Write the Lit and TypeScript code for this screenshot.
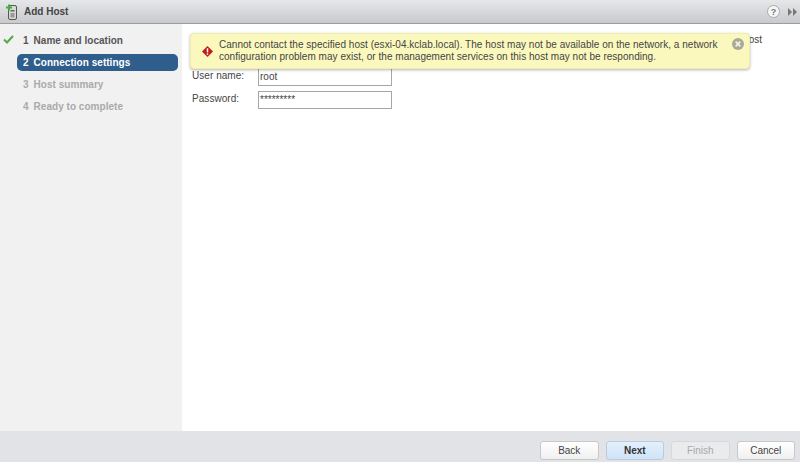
import { LitElement, html, css, svg } from "lit";
import { customElement } from "lit/decorators.js";

@customElement("app-root")
export class AppRoot extends LitElement {
  static styles = css`
    :host { display: block; width: 800px; height: 462px; font-family: "Liberation Sans", Arial, sans-serif; font-size: 10px; color: #444; overflow: hidden; }
    .frame { display: flex; flex-direction: column; width: 800px; height: 462px; background: #fff; }
    .titlebar { height: 24px; box-sizing: border-box; flex: none; display: flex; align-items: center; padding: 0 3px 0 5px; background: linear-gradient(#e6e7e9, #c9cacd); border-bottom: 1px solid #9b9c9e; }
    .appicon { margin-right: 5px; }
    .title { font-weight: bold; color: #444; font-size: 10px; flex: 1; }
    .help { width: 13px; height: 13px; border-radius: 50%; border: 1px solid #aaa; background: #f6f6f6; color: #777; font-size: 9px; font-weight: bold; display: flex; align-items: center; justify-content: center; box-sizing: border-box; margin-right: 8px; }
    .body { flex: 1; display: flex; min-height: 0; }
    .side { width: 182px; flex: none; background: #f1f1f1; padding: 8px 4px 0 0; box-sizing: border-box; display: flex; flex-direction: column; gap: 5px; }
    .step { height: 17px; display: flex; align-items: center; margin-left: 17px; padding-left: 6px; font-weight: bold; border-radius: 5px; color: #555; gap: 5px; position: relative; letter-spacing: 0.03px; }
    .step.cur { background: #2f5d8c; color: #fff; }
    .step.dis { color: #aaa; }
    .check { position: absolute; left: -14px; top: 3px; }
    .main { flex: 1; position: relative; padding: 10px 38px 0 10px; box-sizing: border-box; }
    .intro { height: 12px; line-height: 12px; text-align: right; margin-bottom: 22px; }
    .row { display: grid; grid-template-columns: 66px 134px; height: 18px; margin-bottom: 5px; letter-spacing: 0.05px; }
    .lbl { padding-top: 1px; line-height: 14px; }
    .inp { height: 18px; box-sizing: border-box; border: 1px solid #a6a6a6; padding: 0 0 2px 1px; display: flex; align-items: center; background: #fff; letter-spacing: 0; }
    .alert { position: absolute; left: 8px; top: 9px; width: 560px; height: 36px; box-sizing: border-box; background: #fbf8bd; border: 1px solid #f0edb0; border-radius: 4px; box-shadow: 0 1px 3px rgba(0,0,0,.3); display: flex; align-items: center; padding: 0 5px 0 11px; gap: 6px; }
    .msg { flex: 1; line-height: 12px; letter-spacing: 0.03px; color: #444; white-space: nowrap; }
    .close { align-self: flex-start; margin-top: 4px; }
    .footer { height: 31px; flex: none; background: #e1e3e6; display: flex; justify-content: flex-end; gap: 7px; padding: 10px 5px 2px 0; box-sizing: border-box; }
    .btn { width: 58.5px; box-sizing: border-box; border: 1px solid #c8c8c8; border-radius: 3px; background: linear-gradient(#fff, #f0f0f0); display: flex; align-items: center; justify-content: center; color: #444; }
    .btn.pri { background: linear-gradient(#e4f0fc, #cfe3f8); border-color: #bccbda; font-weight: bold; color: #333; }
    .btn.off { background: #e9ebed; color: #aaa; border-color: #d6d8da; }
  `;

  render() {
    const hostIcon = svg`<svg class="appicon" width="14" height="16" viewBox="0 0 14 16"><rect x="3.5" y="1.5" width="8" height="14" rx="1.5" fill="#d8d8d2" stroke="#55584f"/><rect x="5.5" y="6" width="4" height="1.5" fill="#666"/><rect x="5.5" y="9" width="4" height="4.5" fill="#999"/><path d="M1 2.5h2v-2h2v2h2v2H5v2H3v-2H1z" fill="#3fae3f"/></svg>`;
    return html`<div class="frame">
      <div class="titlebar">${hostIcon}<span class="title">Add Host</span>
        <span class="help">?</span>
        <svg width="9" height="8" viewBox="0 0 9 8"><path d="M0 0l4 4-4 4zM5 0l4 4-4 4z" fill="#777"/></svg>
      </div>
      <div class="body">
        <div class="side">
          <div class="step"><svg class="check" width="11" height="9" viewBox="0 0 11 9"><path d="M1 4.5l3 3L10 1" fill="none" stroke="#55a845" stroke-width="2"/></svg><span>1</span><span>Name and location</span></div>
          <div class="step cur"><span>2</span><span>Connection settings</span></div>
          <div class="step dis"><span>3</span><span>Host summary</span></div>
          <div class="step dis"><span>4</span><span>Ready to complete</span></div>
        </div>
        <div class="main">
          <div class="intro">host</div>
          <div class="row"><span class="lbl">User name:</span><div class="inp">root</div></div>
          <div class="row"><span class="lbl">Password:</span><div class="inp">*********</div></div>
          <div class="alert">
            <svg width="11" height="11" viewBox="0 0 12 12"><path d="M6 0l6 6-6 6-6-6z" fill="#c41a1a"/><rect x="5.2" y="2.5" width="1.6" height="4.5" fill="#fff"/><rect x="5.2" y="8" width="1.6" height="1.6" fill="#fff"/></svg>
            <div class="msg">Cannot contact the specified host (esxi-04.kclab.local). The host may not be available on the network, a network<br>configuration problem may exist, or the management services on this host may not be responding.</div>
            <svg class="close" width="12" height="12" viewBox="0 0 13 13"><circle cx="6.5" cy="6.5" r="6.5" fill="#a9a99a"/><path d="M4 4l5 5M9 4l-5 5" stroke="#f4f4e4" stroke-width="1.8"/></svg>
          </div>
        </div>
      </div>
      <div class="footer">
        <div class="btn">Back</div><div class="btn pri">Next</div><div class="btn off">Finish</div><div class="btn">Cancel</div>
      </div>
    </div>`;
  }
}
